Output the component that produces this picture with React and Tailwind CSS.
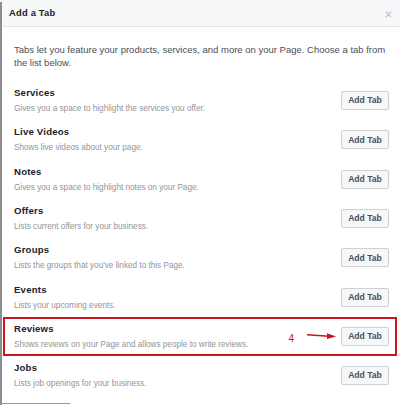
const tabs = [
  { title: 'Services', desc: 'Gives you a space to highlight the services you offer.' },
  { title: 'Live Videos', desc: 'Shows live videos about your page.' },
  { title: 'Notes', desc: 'Gives you a space to highlight notes on your Page.' },
  { title: 'Offers', desc: 'Lists current offers for your business.' },
  { title: 'Groups', desc: "Lists the groups that you've linked to this Page." },
  { title: 'Events', desc: 'Lists your upcoming events.' },
  { title: 'Reviews', desc: 'Shows reviews on your Page and allows people to write reviews.', marked: true },
  { title: 'Jobs', desc: 'Lists job openings for your business.' },
];

const App = () => {
  return (
    <div className="relative w-[400px] h-[405px] overflow-hidden bg-white font-['Liberation_Sans',Arial,sans-serif]">
      {/* left edge of the dialog */}
      <div className="absolute left-0 top-[2px] bottom-0 w-[2px] bg-[#8d8d8d]" />

      <div className="flex items-center justify-between h-[27px] bg-[#f6f7f9] border-b border-[#e5e5e5] pl-[9px] pr-[8px]">
        <h1 className="font-bold text-[9.4px] tracking-[0.2px] text-[#1d2129]">Add a Tab</h1>
        <svg width="7" height="7" viewBox="0 0 8 8" className="mt-[2px]">
          <path d="M1 1 L7 7 M7 1 L1 7" stroke="#bec2c9" strokeWidth="1.4" />
        </svg>
      </div>

      <p className="px-[14px] pt-[16px] text-[9.5px] leading-[13px] text-[#4b4f56]">
        Tabs let you feature your products, services, and more on your Page. Choose a tab from the list below.
      </p>

      <div className="mt-[12px] px-[3px]">
        {tabs.map((t) => (
          <div key={t.title}
            className={`flex items-center justify-between h-[39.3px] pl-[9px] pr-[6px] border-2 ${t.marked ? 'border-[#c8161d]' : 'border-transparent'}`}>
            <div className="pt-[1px]">
              <p className="leading-[16px] text-[9.6px] font-bold text-[#1d2129] tracking-[0.2px]">{t.title}</p>
              <p className="leading-[16px] text-[8.2px] text-[#90949c]">{t.desc}</p>
            </div>
            <div className="flex items-center gap-[4px]">
              {t.marked && (
                <div className="flex items-center gap-[13px]">
                  <span className="text-[#c8161d] text-[10px] mt-[5px]">4</span>
                  <svg width="30" height="8" viewBox="0 0 30 8">
                    <path d="M0 2.8 L22 4.2" stroke="#c8161d" strokeWidth="1.6" />
                    <path d="M20 1.2 L29 4.4 L20 7 Z" fill="#c8161d" />
                  </svg>
                </div>
              )}
              <button className="w-[48px] h-[19px] bg-[#f6f7f9] border border-[#ced0d4] rounded-[2px] text-[8.6px] font-bold text-[#4b4f56] leading-none">
                Add Tab
              </button>
            </div>
          </div>
        ))}
      </div>

      <div className="absolute left-0 bottom-[1px] w-[70px] h-[1px] bg-[#9a9a9a]" />
    </div>
  );
};

export default App;
